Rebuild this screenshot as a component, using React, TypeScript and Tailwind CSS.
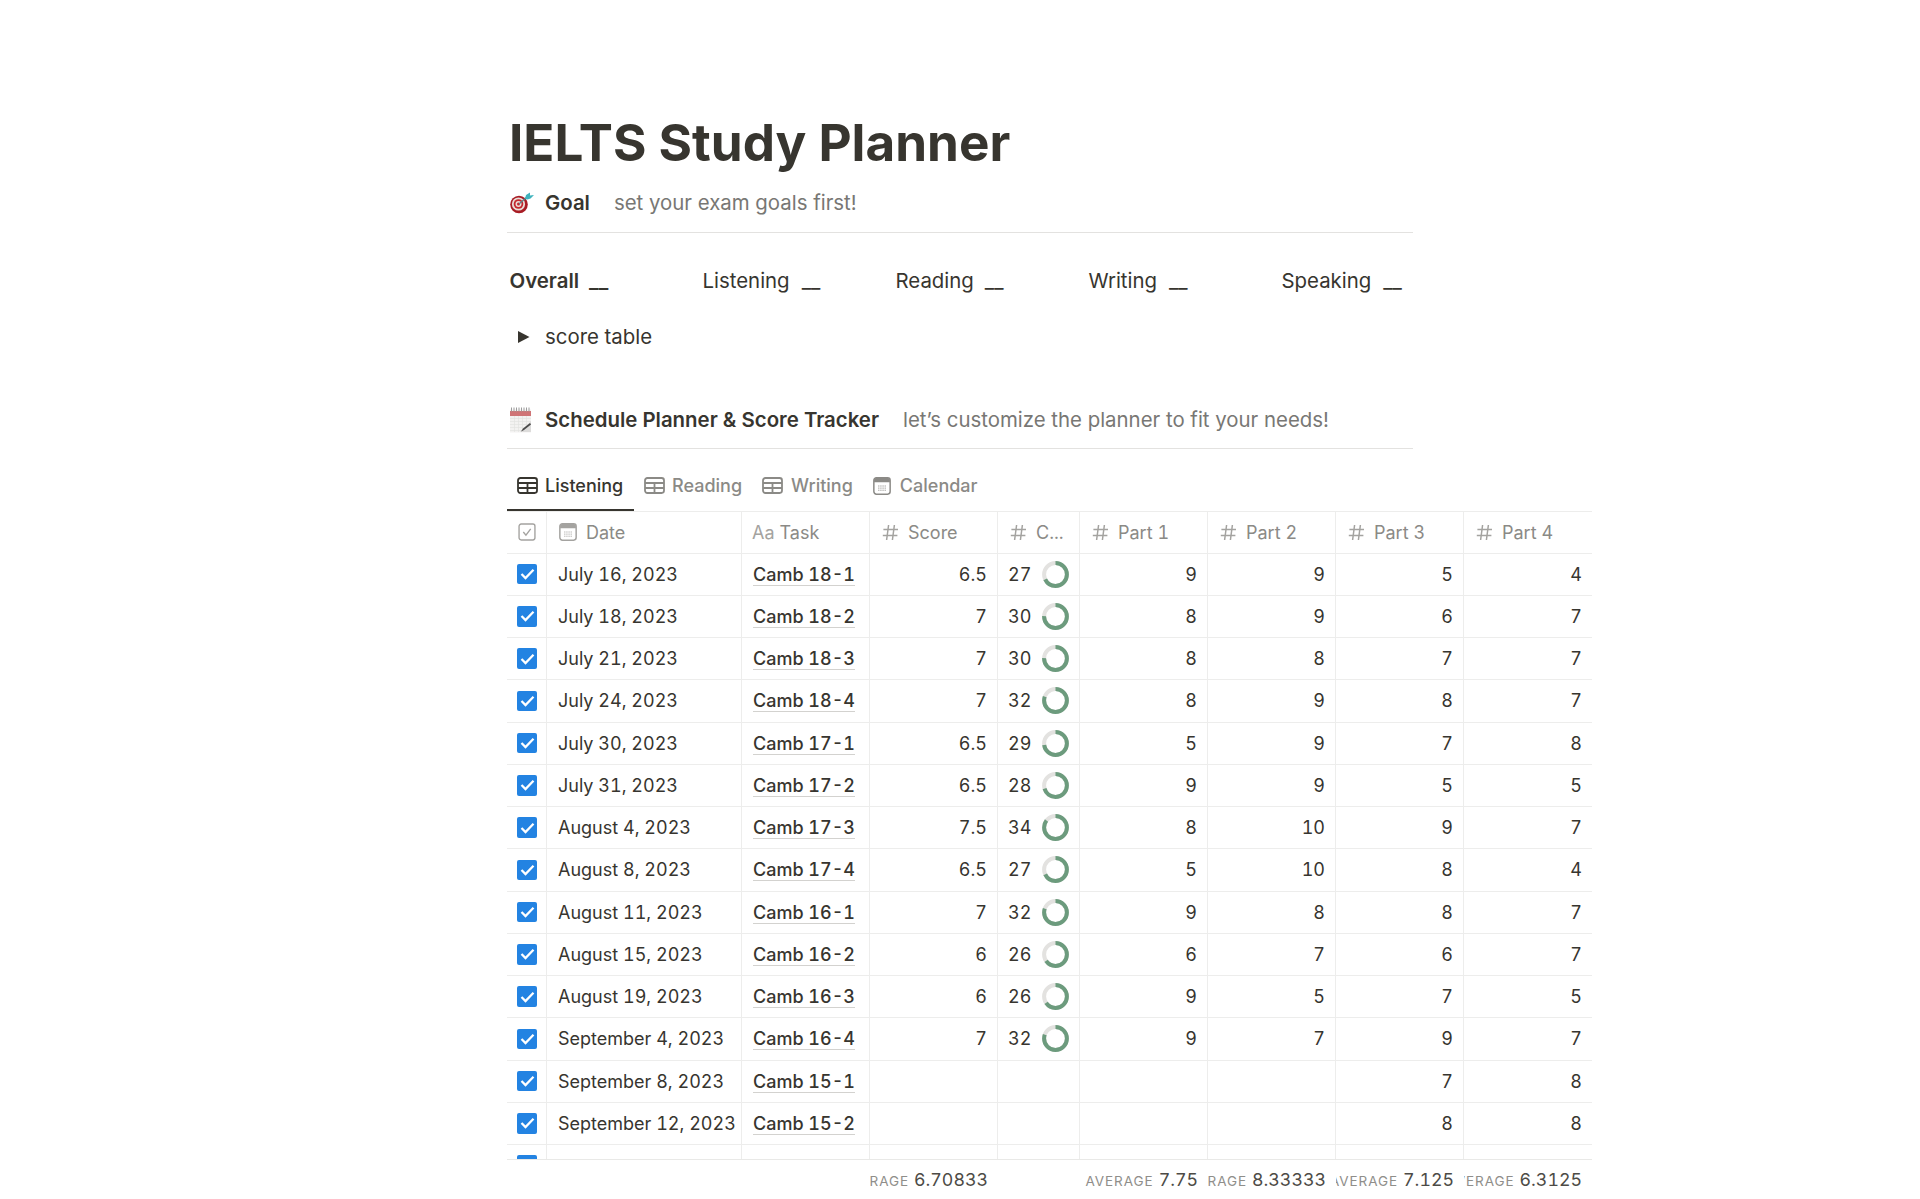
import React from "react";

const rows: [string, string, string, number | null, string, string, string, string][] = [
  ["July 16, 2023", "Camb 18-1", "6.5", 27, "9", "9", "5", "4"],
  ["July 18, 2023", "Camb 18-2", "7", 30, "8", "9", "6", "7"],
  ["July 21, 2023", "Camb 18-3", "7", 30, "8", "8", "7", "7"],
  ["July 24, 2023", "Camb 18-4", "7", 32, "8", "9", "8", "7"],
  ["July 30, 2023", "Camb 17-1", "6.5", 29, "5", "9", "7", "8"],
  ["July 31, 2023", "Camb 17-2", "6.5", 28, "9", "9", "5", "5"],
  ["August 4, 2023", "Camb 17-3", "7.5", 34, "8", "10", "9", "7"],
  ["August 8, 2023", "Camb 17-4", "6.5", 27, "5", "10", "8", "4"],
  ["August 11, 2023", "Camb 16-1", "7", 32, "9", "8", "8", "7"],
  ["August 15, 2023", "Camb 16-2", "6", 26, "6", "7", "6", "7"],
  ["August 19, 2023", "Camb 16-3", "6", 26, "9", "5", "7", "5"],
  ["September 4, 2023", "Camb 16-4", "7", 32, "9", "7", "9", "7"],
  ["September 8, 2023", "Camb 15-1", "", null, "", "", "7", "8"],
  ["September 12, 2023", "Camb 15-2", "", null, "", "", "8", "8"],
];

const cols = "grid grid-cols-[40px_195px_128px_128px_82px_128px_128px_128px_128px]";

function Dart() {
  return (
    <svg width="26" height="22" viewBox="0 0 26 22" className="shrink-0">
      <circle cx="10" cy="12.5" r="8.8" fill="#a81c24" />
      <circle cx="9.5" cy="12" r="6.6" fill="#e8dcd6" />
      <circle cx="9.5" cy="12" r="4.8" fill="#c5282e" />
      <circle cx="9.5" cy="12" r="3" fill="#ecdcd6" />
      <circle cx="9.5" cy="12" r="1.5" fill="#c5282e" />
      <path d="M10 12 L19 4" stroke="#5c7f86" strokeWidth="1.2" />
      <path d="M16 7 L17 3 L21 0.5 L21 3.5 L25 3 L21.5 6.5 L18.5 7.5 Z" fill="#3fb3bd" />
    </svg>
  );
}

function CalEmoji() {
  return (
    <svg width="24" height="26" viewBox="0 0 24 26" className="shrink-0">
      <rect x="1" y="2.5" width="21" height="23" fill="#f3f2f1" />
      <rect x="1" y="4" width="21" height="5" fill="#cf7476" />
      {[2, 4.5, 7, 9.5, 12, 14.5, 17, 19.5].map((x) => (
        <rect key={x} x={x} y="0.5" width="1" height="4" fill="#9c9c9c" />
      ))}
      {[11, 14, 17, 20, 23].map((y) => (
        <rect key={y} x="1" y={y} width="21" height="0.6" fill="#e2e1e0" />
      ))}
      {[5, 9, 13, 17].map((x) => (
        <rect key={x} x={x} y="9" width="0.6" height="16" fill="#e2e1e0" />
      ))}
      <path d="M22 14 L22 25 L11 25 Z" fill="#dddcdb" />
      <path d="M12 24.5 L14 21.5 L21 16 L22 17.5 L15 23 Z" fill="#4a4a4a" />
    </svg>
  );
}

function TableIcon({ color }: { color: string }) {
  return (
    <svg width="21" height="17" viewBox="0 0 21 17" fill="none" stroke={color} strokeWidth="1.8" className="shrink-0">
      <rect x="1" y="1" width="19" height="15" rx="2.4" />
      <path d="M1 6H20M1 11H20M10.5 6V16" />
    </svg>
  );
}

function CalIcon({ color, s = 18 }: { color: string; s?: number }) {
  return (
    <svg width={s} height={s} viewBox="0 0 17 17" className="shrink-0">
      <rect x="0.8" y="0.8" width="15.4" height="15.4" rx="2.4" fill="none" stroke={color} strokeWidth="1.4" />
      <path d="M1 3a2 2 0 0 1 2-2h11a2 2 0 0 1 2 2v2H1z" fill={color} />
      {[5, 7, 9, 11].map((x) =>
        [8, 10, 12].map((y) => <rect key={`${x}-${y}`} x={x} y={y} width="1" height="1" fill={color} />)
      )}
    </svg>
  );
}

function Hash() {
  return (
    <svg width="17" height="17" viewBox="0 0 17 17" fill="none" stroke="#a4a3a0" strokeWidth="1.5" className="shrink-0">
      <path d="M6.6 1 L4.6 16 M12.4 1 L10.4 16 M1.4 5.6 H16 M0.8 11.4 H15.4" />
    </svg>
  );
}

function Check() {
  return (
    <div className="ml-[1px] w-[20.5px] h-[20.5px] bg-[#2383e2] rounded-[2px] flex items-center justify-center shrink-0">
      <svg width="15" height="12" viewBox="0 0 15 12" fill="none" stroke="#ffffff" strokeWidth="2.3">
        <path d="M1.5 6 L5.5 10 L13.5 1.8" />
      </svg>
    </div>
  );
}

function Ring({ v }: { v: number }) {
  const r = 11.4;
  const c = 2 * Math.PI * r;
  return (
    <svg width="27" height="27" viewBox="0 0 27 27" className="shrink-0 -rotate-90">
      <circle cx="13.5" cy="13.5" r={r} fill="none" stroke="#e3e2e0" strokeWidth="4" />
      <circle
        cx="13.5"
        cy="13.5"
        r={r}
        fill="none"
        stroke="#6c9b7d"
        strokeWidth="4"
        strokeDasharray={`${(v / 40) * c} ${c}`}
      />
    </svg>
  );
}

function Head({ children, border = true }: { children: React.ReactNode; border?: boolean }) {
  return (
    <div
      className={`flex items-center pl-[12px] pr-[8px] gap-[9px] text-[18px] text-[#8b8a86] min-w-0 ${
        border ? "border-r border-[#ededec]" : ""
      }`}
    >
      {children}
    </div>
  );
}

function Num({ children, border = true }: { children?: React.ReactNode; border?: boolean }) {
  return (
    <div className={`flex items-center justify-end pr-[10px] ${border ? "border-r border-[#ededec]" : ""}`}>
      {children}
    </div>
  );
}

function Foot({ label, value }: { label: string; value: string }) {
  return (
    <div className="flex items-baseline justify-end pr-[10px] overflow-hidden whitespace-nowrap gap-[5px] tabular-nums">
      <span className="text-[13.5px] tracking-[0.07em] text-[#8f8e8a] shrink-0">{label}</span>
      <span className="text-[17.8px] text-[#4d4b46] shrink-0">{value}</span>
    </div>
  );
}

export default function App() {
  return (
    <div className="h-[1199px] overflow-hidden bg-white font-[Inter,sans-serif] text-[#37352f]">
      <div className="ml-[507px] w-[1085px]">
        <h1 className="pt-[110px] pl-[2px] text-[51.2px] leading-[64px] font-bold text-[#37352f]">IELTS Study Planner</h1>

        <div className="w-[906px] mt-[11px] h-[48px] flex items-center border-b border-[#e3e2e0] pb-[11px] text-[20.4px]">
          <div className="w-[38px] pl-[2px] flex"><Dart /></div>
          <span className="font-semibold text-[#37352f]">Goal</span>
          <span className="ml-[24px] text-[#787774]">set your exam goals first!</span>
        </div>

        <div className="w-[906px] mt-[33px] pl-[2.5px] grid grid-cols-[193px_193px_193px_193px_1fr] text-[20.4px] leading-[30px]">
          <div className="font-semibold">Overall<span className="ml-[10px]">__</span></div>
          <div>Listening<span className="ml-[12px]">__</span></div>
          <div>Reading<span className="ml-[11px]">__</span></div>
          <div>Writing<span className="ml-[12px]">__</span></div>
          <div>Speaking<span className="ml-[12px]">__</span></div>
        </div>

        <div className="mt-[26px] flex items-center h-[30px] text-[20.4px]">
          <div className="w-[38px] pl-[10px]">
            <svg width="13" height="14" viewBox="0 0 13 14"><path d="M1 1 L12.5 7 L1 13 Z" fill="#37352f" /></svg>
          </div>
          <span>score table</span>
        </div>

        <div className="w-[906px] mt-[50px] h-[47px] flex items-center border-b border-[#e3e2e0] pb-[10px] text-[20.4px]">
          <div className="w-[38px] pl-[2px] flex"><CalEmoji /></div>
          <span className="font-semibold">Schedule Planner &amp; Score Tracker</span>
          <span className="ml-[24px] text-[#787774]">let’s customize the planner to fit your needs!</span>
        </div>

        <div className="mt-[14.5px] h-[47px] flex text-[18px] font-medium text-[#8b8a86]">
          <div className="flex items-center gap-[7px] pl-[10px] pb-[1px] w-[127px] border-b-[2.5px] border-[#37352f] text-[#37352f]">
            <TableIcon color="#37352f" />Listening
          </div>
          <div className="flex items-center gap-[7px] pl-[10px] pr-[10px] pb-[3px]"><TableIcon color="#8b8a86" />Reading</div>
          <div className="flex items-center gap-[8px] pl-[10px] pr-[10px] pb-[3px]"><TableIcon color="#8b8a86" />Writing</div>
          <div className="flex items-center gap-[9px] pl-[10px] pr-[10px] pb-[3px]"><CalIcon color="#8b8a86" />Calendar</div>
        </div>

        <div className={`${cols} h-[43px] border-y border-[#ededec] tabular-nums`}>
          <div className="flex items-center justify-center border-r border-[#ededec]">
            <svg width="18" height="18" viewBox="0 0 17 17" fill="none" stroke="#a4a3a0" strokeWidth="1.3">
              <rect x="1" y="1" width="15" height="15" rx="2" />
              <path d="M5 8.5 L7.5 11.5 L12 5.5" />
            </svg>
          </div>
          <Head><CalIcon color="#a4a3a0" />Date</Head>
          <Head><span className="text-[#a4a3a0] -ml-[2px] -mr-[4px]">Aa</span>Task</Head>
          <Head><Hash />Score</Head>
          <Head><Hash />C...</Head>
          <Head><Hash />Part 1</Head>
          <Head><Hash />Part 2</Head>
          <Head><Hash />Part 3</Head>
          <Head border={false}><Hash />Part 4</Head>
        </div>

        <div className="h-[606px] overflow-hidden border-b border-[#e9e9e7] text-[18px] text-[#37352f] tabular-nums">
          {[...rows, null].map((r, i) => (
            <div key={i} className={`${cols} h-[42.25px] border-b border-[#ededec]`}>
              <div className="flex items-center justify-center border-r border-[#ededec]"><Check /></div>
              <div className="flex items-center pl-[11px] whitespace-nowrap border-r border-[#ededec]">{r?.[0]}</div>
              <div className="flex items-center pl-[11px] border-r border-[#ededec]">
                {r && <span className="font-medium leading-[21px] border-b border-[#d3d2cf] mt-[1px]">{r[1]}</span>}
              </div>
              <Num>{r?.[2]}</Num>
              <div className="flex items-center pl-[10px] gap-[11px] border-r border-[#ededec]">
                {r && r[3] !== null && (
                  <>
                    <span>{r[3]}</span>
                    <Ring v={r[3]} />
                  </>
                )}
              </div>
              <Num>{r?.[4]}</Num>
              <Num>{r?.[5]}</Num>
              <Num>{r?.[6]}</Num>
              <Num border={false}>{r?.[7]}</Num>
            </div>
          ))}
        </div>

        <div className={`${cols} h-[42px] items-center`}>
          <div />
          <div />
          <div />
          <Foot label="AVERAGE" value="6.70833" />
          <div />
          <Foot label="AVERAGE" value="7.75" />
          <Foot label="AVERAGE" value="8.33333" />
          <Foot label="AVERAGE" value="7.125" />
          <Foot label="AVERAGE" value="6.3125" />
        </div>
      </div>
    </div>
  );
}
